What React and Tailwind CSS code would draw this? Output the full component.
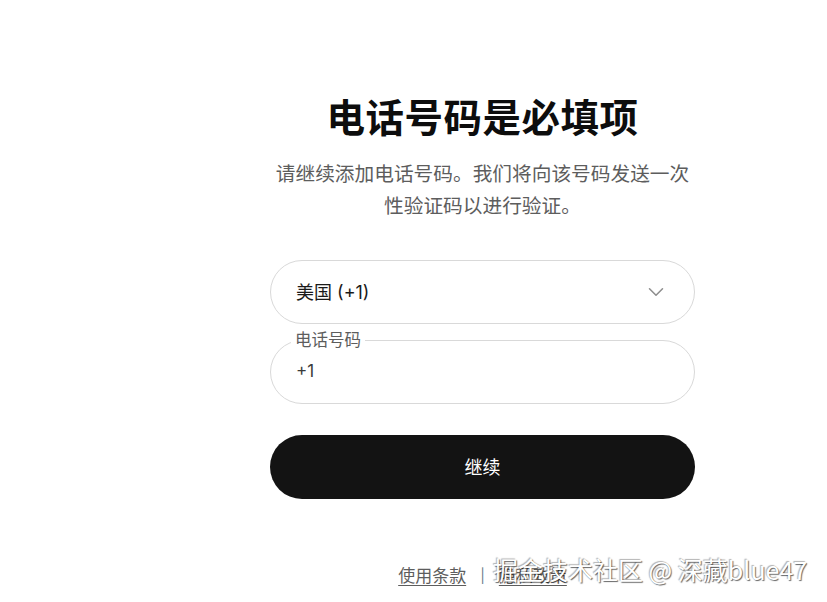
import React from "react";
import { ChevronDown } from "lucide-react";

export default function App() {
  const font = { fontFamily: 'Inter, "Noto Sans CJK SC", "Noto Sans", sans-serif' };
  return (
    <div className="relative min-h-[602px] w-[827px] bg-white" style={font}>
      <div className="ml-[270px] flex w-[425px] flex-col items-center pt-[95px]">
        <h1 className="text-[38.5px] leading-[46px] font-semibold text-[#0d0d0d] tracking-[0.5px]">
          电话号码是必填项
        </h1>
        <p className="mt-[17px] text-center text-[19.7px] leading-[32px] text-[#5d5d5d]">
          请继续添加电话号码。我们将向该号码发送一次性验证码以进行验证。
        </p>

        <div className="mt-[38px] flex h-[64px] w-full items-center justify-between rounded-full border border-[#d9d9d9] pl-[25px] pr-[25px]">
          <span className="text-[18px] text-[#1a1a1a]">美国 (+1)</span>
          <ChevronDown size={26} strokeWidth={1.4} className="text-[#8e8e8e]" />
        </div>

        <div className="relative mt-[16px] flex h-[64px] w-full items-center rounded-full border border-[#d9d9d9] pl-[25px]">
          <span className="absolute left-[20px] top-[-11px] bg-white px-[4px] text-[16.5px] leading-[20px] text-[#5d5d5d]">
            电话号码
          </span>
          <span className="text-[17px] text-[#3a3a3a]">+1</span>
        </div>

        <button className="mt-[31px] flex h-[64px] w-full items-center justify-center rounded-full bg-[#131313] text-[18px] font-normal text-white">
          继续
        </button>

        <div className="mt-[65px] flex items-center gap-[14px] text-[17px] leading-[24px] text-[#5d5d5d]">
          <a className="underline underline-offset-[3px]">使用条款</a>
          <span className="text-[14px] text-[#6b7c8c]">|</span>
          <a className="underline underline-offset-[3px]">隐私政策</a>
        </div>
      </div>

      <div
        className="absolute left-[493px] top-[552px] whitespace-nowrap text-[25px] leading-[34px] text-white [text-shadow:1px_1px_1px_rgba(0,0,0,0.6),-1px_-1px_1px_rgba(0,0,0,0.3)]"
        style={{ fontFamily: '"Noto Sans CJK SC", sans-serif' }}
      >
        掘金技术社区 @ 深藏blue47
      </div>
    </div>
  );
}
